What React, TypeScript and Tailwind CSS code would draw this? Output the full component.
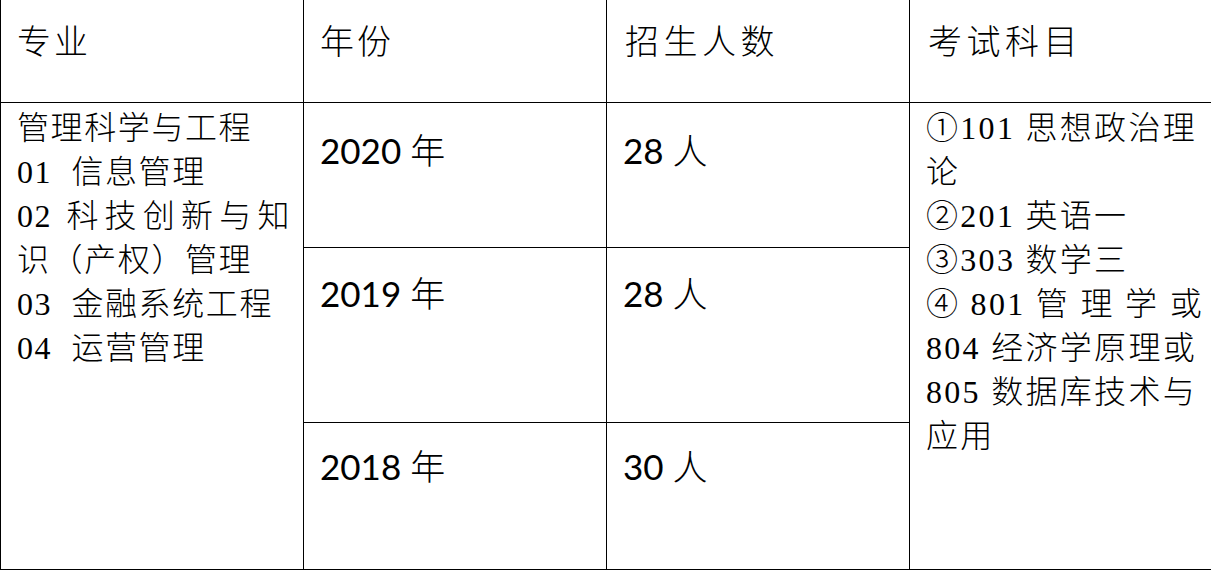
const majors = [
  { text: '管理科学与工程', justify: false },
  { text: '01  信息管理', justify: false },
  { text: '02 科技创新与知', justify: true },
  { text: '识（产权）管理', justify: false },
  { text: '03  金融系统工程', justify: false },
  { text: '04  运营管理', justify: false },
];

const subjects = [
  { text: '①101 思想政治理', justify: false },
  { text: '论', justify: false },
  { text: '②201 英语一', justify: false },
  { text: '③303 数学三', justify: false },
  { text: '④ 801 管 理 学 或', justify: true },
  { text: '804 经济学原理或', justify: false },
  { text: '805 数据库技术与', justify: false },
  { text: '应用', justify: false },
];

const years = [
  { year: '2020', count: '28', pad: 'pt-[25px]' },
  { year: '2019', count: '28', pad: 'pt-[23px]' },
  { year: '2018', count: '30', pad: 'pt-[21px]' },
];

// 漢字部分だけ細めのウェイトにする
function Mixed({ text }: { text: string }) {
  const parts = text.split(/([0-9 ]+)/).filter(Boolean);
  return (
    <>
      {parts.map((p, i) =>
        /[0-9 ]/.test(p) ? (
          <span key={i} className="font-[family-name:Liberation_Serif,DejaVu_Serif,serif]">{p}</span>
        ) : (
          <span key={i} className="font-light">{p}</span>
        )
      )}
    </>
  );
}

export default function App() {
  return (
    <div className="w-[1211px] h-[572px] bg-white overflow-hidden text-black font-[family-name:Liberation_Serif,Noto_Sans_CJK_SC,serif]">
      <div className="grid grid-cols-[302px_302px_302px_1fr] grid-rows-[102px_144px_174px_146px] gap-px bg-black pl-px pb-px">
        {/* 表头 */}
        <div className="bg-white pl-4 pt-[21px] text-[34px] leading-[44px] tracking-[3px] font-light">专业</div>
        <div className="bg-white pl-4 pt-[21px] text-[34px] leading-[44px] tracking-[3px] font-light">年份</div>
        <div className="bg-white pl-[18px] pt-[21px] text-[34px] leading-[44px] tracking-[4.5px] font-light">招生人数</div>
        <div className="bg-white pl-[18px] pt-[21px] text-[34px] leading-[44px] tracking-[4.5px] font-light">考试科目</div>

        {/* 专业 */}
        <div className="row-span-3 bg-white pl-4 pr-3 pt-[3px] text-[32px] leading-[44px] tracking-[1.6px] whitespace-pre">
          {majors.map((m) => (
            <div key={m.text} className={m.justify ? 'text-justify [text-align-last:justify]' : ''}>
              <Mixed text={m.text} />
            </div>
          ))}
        </div>

        {/* 年份・人数 */}
        {years.slice(0, 1).map((y) => (
          <YearCells key={y.year} {...y} />
        ))}

        {/* 考试科目 */}
        <div className="row-span-3 bg-white pl-4 pr-3 pt-[3px] text-[32px] leading-[44px] tracking-[2.3px] whitespace-pre">
          {subjects.map((s) => (
            <div key={s.text} className={s.justify ? 'text-justify [text-align-last:justify]' : ''}>
              <Mixed text={s.text} />
            </div>
          ))}
        </div>

        {years.slice(1).map((y) => (
          <YearCells key={y.year} {...y} />
        ))}
      </div>
    </div>
  );
}

function YearCells({ year, count, pad }: { year: string; count: string; pad: string }) {
  return (
    <>
      <div className={`bg-white pl-4 ${pad} text-[35px] leading-[44px] font-[family-name:Lato,Noto_Sans_CJK_SC,sans-serif]`}>
        {year} <span className="font-light">年</span>
      </div>
      <div className={`bg-white pl-4 ${pad} text-[35px] leading-[44px] font-[family-name:Lato,Noto_Sans_CJK_SC,sans-serif]`}>
        {count} <span className="font-light">人</span>
      </div>
    </>
  );
}
